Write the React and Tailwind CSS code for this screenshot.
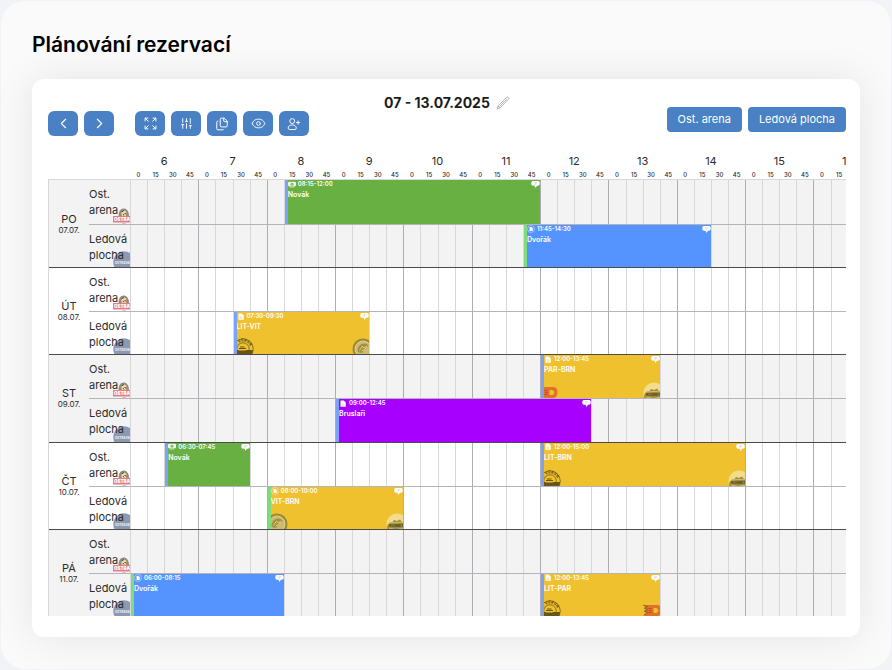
import { ChevronLeft, ChevronRight, SlidersVertical, Files, Eye } from "lucide-react";

const hours = [6, 7, 8, 9, 10, 11, 12, 13, 14, 15, 16];
const quarters = hours.flatMap((hour) => [0, 15, 30, 45].map((minute) => ({ hour, minute })));

const days = [
  {
    name: "PO",
    date: "07.07.",
    arena: [{ time: "08:15-12:00", title: "Novák", color: "green", icon: "money" }],
    plocha: [{ time: "11:45-14:30", title: "Dvořák", color: "blue", icon: "ring", done: true }],
  },
  {
    name: "ÚT",
    date: "08.07.",
    arena: [],
    plocha: [{ time: "07:30-09:30", title: "LIT-VIT", color: "yellow", icon: "file" }],
  },
  {
    name: "ST",
    date: "09.07.",
    arena: [{ time: "12:00-13:45", title: "PAR-BRN", color: "yellow", icon: "file" }],
    plocha: [{ time: "09:00-12:45", title: "Bruslaři", color: "purple", icon: "file" }],
  },
  {
    name: "ČT",
    date: "10.07.",
    arena: [
      { time: "06:30-07:45", title: "Novák", color: "green", icon: "money" },
      { time: "12:00-15:00", title: "LIT-BRN", color: "yellow", icon: "file" },
    ],
    plocha: [{ time: "08:00-10:00", title: "VIT-BRN", color: "yellow", icon: "ring", done: true }],
  },
  {
    name: "PÁ",
    date: "11.07.",
    arena: [],
    plocha: [
      { time: "06:00-08:15", title: "Dvořák", color: "blue", icon: "ring", done: true },
      { time: "12:00-13:45", title: "LIT-PAR", color: "yellow", icon: "file" },
    ],
  },
];

const colors = {
  green: "bg-[#68b041]",
  blue: "bg-[#5594ff]",
  yellow: "bg-[#efc12e]",
  purple: "bg-[#a800ff]",
};

// "08:15" -> grid line of the quarter it starts on
const toLine = (time) => {
  const [h, m] = time.split(":").map(Number);
  return (h - hours[0]) * 4 + m / 15 + 1;
};

const ExpandIcon = () => (
  <svg viewBox="0 0 24 24" className="size-[13px]" fill="none" stroke="currentColor" strokeWidth="1.8">
    <path d="M2 8V2h6M2 2l6.500 6.500M16 2h6v6M22 2l-6.500 6.500M2 16v6h6M2 22l6.500-6.500M22 16v6h-6M22 22l-6.500-6.500" />
  </svg>
);

const PersonAddIcon = () => (
  <svg viewBox="0 0 24 24" className="size-3.5" fill="none" stroke="currentColor" strokeWidth="1.6">
    <circle cx="9" cy="7" r="4.2" />
    <path d="M9 13.500c-4 0-7 2.500-7 5.500 0 1.500 1 2.500 2.500 2.500h9c1.500 0 2.500-1 2.500-2.500 0-3-3-5.500-7-5.500zM19 6v7M15.500 9.500h7" />
  </svg>
);

const PencilIcon = () => (
  <svg viewBox="0 0 24 24" className="size-3.5" fill="none" stroke="currentColor" strokeWidth="1.2">
    <path d="M2 22l1.500-5L18 2.500c1-1 2.500-1 3.300 0 .9.9.9 2.300 0 3.300L7 20.500zM3.500 17L7 20.500M16 4.500L19.500 8M5.500 18.500L17.500 6.500" />
  </svg>
);

const EventIcon = ({ type }) => {
  if (type === "money") {
    return (
      <svg viewBox="0 0 14 12" className="h-[7px] w-2">
        <rect x="0" y="1" width="14" height="8.500" rx="2.500" fill="#fff" fillOpacity="0.9" />
        <circle cx="7" cy="5.500" r="2.500" fill="#68b041" />
        <path d="M7 4v3" stroke="#fff" />
        <path d="M3 11h8" stroke="#fff" strokeOpacity="0.7" />
      </svg>
    );
  }
  if (type === "ring") {
    return (
      <svg viewBox="0 0 16 16" className="size-2">
        <circle cx="8" cy="8" r="7" fill="none" stroke="#fff" strokeOpacity="0.8" />
        <path d="M5 4h4l2.500 2.500V12H5z" fill="#fff" />
      </svg>
    );
  }
  return (
    <svg viewBox="0 0 14 14" className="h-[7px] w-2">
      <path d="M2 1h6.500l4 4v8.500H2z" fill="#fff" />
      <path d="M4.500 8h5M4.500 10.500h5" stroke="#efc12e" />
    </svg>
  );
};

const CommentIcon = () => (
  <svg viewBox="0 0 18 15" className="absolute top-0.5 right-0 h-[7px] w-[9px]">
    <path d="M4 0h10c2.500 0 4 1.500 4 3.500v3c0 2-1.500 3.500-4 3.500h-2l-3 5-2-5H4C1.500 10 0 8.500 0 6.500v-3C0 1.500 1.500 0 4 0z" fill="#fff" />
    <path d="M6.500 4h6M7 6.500h3" stroke="#a5a5a5" />
  </svg>
);

const TeamLogo = ({ team, id }) => {
  if (team === "LIT") {
    return (
      <svg viewBox="0 0 44 44" className="size-[22px] opacity-75">
        <defs>
          <path id={id} d="M7 22a15 15 0 0 1 30 0" />
        </defs>
        <circle cx="22" cy="22" r="20.500" fill="none" stroke="#3b3210" strokeWidth="1.500" />
        <circle cx="22" cy="22" r="12.500" fill="none" stroke="#3b3210" strokeWidth="1.500" />
        <text fontSize="8" fontWeight="800" fill="#3b3210">
          <textPath href={`#${id}`}>HC VERVA</textPath>
        </text>
        <path d="M2 24h40a20 20 0 0 1-40 0z" fill="#3b3210" />
        <path d="M12 22c1-6 5-8 10-8s9 3 9 7l-4 4H14z" fill="#efc12e" />
        <path d="M14 21h14M16 18h9" stroke="#3b3210" strokeWidth="2" />
      </svg>
    );
  }
  if (team === "VIT") {
    return (
      <svg viewBox="0 0 44 44" className="size-[22px] opacity-80">
        <circle cx="22" cy="22" r="21" fill="#857a45" />
        <circle cx="22" cy="22" r="16" fill="#c5bc7e" stroke="#ddd59b" strokeWidth="2" />
        <path d="M11 26c0-9 6-15 14-15 5 0 8 3 8 7-3-2-6-1-8 3l-3 7c-4 3-8 2-11-2z" fill="#918449" />
        <path d="M15 25l6-9 3 4 6-4M19 26l6-3" fill="none" stroke="#d9d091" strokeWidth="2" />
      </svg>
    );
  }
  if (team === "PAR") {
    return (
      <svg viewBox="0 0 44 44" className="size-[22px]">
        <path d="M0 10h29c5 0 8 4 8 10s-3 12-8 12H0l7-6-6-3 6-3-6-3 6-2z" fill="#e0702b" />
        <path d="M0 10l9 3-6 3 7 3-7 3 7 3-8 5" fill="none" stroke="#8a6a20" strokeWidth="2" />
        <path d="M22 17h4c5 0 5 8 0 8h-4z" fill="#efc12e" stroke="#efc12e" strokeWidth="2" />
        <path d="M11 17h6M12 21h5M11 25h6" stroke="#b8521d" strokeWidth="2" />
      </svg>
    );
  }
  return (
    <svg viewBox="0 0 44 44" className="size-[22px]">
      <circle cx="22" cy="22" r="21" fill="#f2dc8d" />
      <path d="M3 24l4-5 6-1 3-4 6 2 6-3 4 5 7 2-1 11-7 5-10 2-12-2-7-5z" fill="#a08d3d" />
      <path d="M6 20l32-2M6 30l14 3 16-3" fill="none" stroke="#e5cf77" strokeWidth="1.500" />
      <text x="6" y="28" fontSize="8" fontWeight="800" fontStyle="italic" fill="#5a4f20">
        KOMETA
      </text>
    </svg>
  );
};

const ArenaLogo = () => (
  <svg viewBox="0 0 44 44" className="absolute -right-[5px] -bottom-1.5 size-[22px]">
    <path d="M11 16c0-9 4-15 10-15s11 5 11 15z" fill="#8f8b85" />
    <path d="M18 16c-3-5-1-11 4-11s6 6 4 11z" fill="#f3dc9a" />
    <path d="M17 8l5-3M23 11l4 1M20 12l2 3" stroke="#4c4a46" strokeWidth="2" />
    <path d="M0 16h44v13H0z" fill="#e07f8a" />
    <text x="2" y="26" fontSize="9" fontWeight="900" fill="#fff">
      OSTRAVA
    </text>
    <path d="M18 30l4 4 4-4z" fill="#f0b0b5" />
  </svg>
);

const PlochaLogo = () => (
  <svg viewBox="0 0 44 44" className="absolute -right-[5px] -bottom-1.5 size-[22px]">
    <circle cx="22" cy="22" r="21.500" fill="#8a9ab3" />
    <text x="4" y="25" fontSize="6" fontWeight="800" fill="#e6ebf2">
      OSTRAVAR
    </text>
  </svg>
);

const Reservation = ({ event, id }) => {
  const [from, to] = event.time.split("-");
  const teams = event.color === "yellow" ? event.title.split("-") : [];

  return (
    <div
      style={{ gridColumn: `${toLine(from)} / ${toLine(to)}` }}
      className={`relative row-start-1 -mt-px ml-px overflow-hidden border-l-[3px] text-white ${colors[event.color]} ${
        event.done ? "border-[#7fdc7c]" : "border-[#7aa2f7]"
      }`}
    >
      <div className="flex h-[10px] items-center gap-0.5 text-[6px] leading-[10px] font-semibold">
        <EventIcon type={event.icon} />
        <span>{event.time}</span>
      </div>
      <p className="text-[7px] leading-3 font-semibold">{event.title}</p>
      <CommentIcon />
      {teams.length > 0 && (
        <>
          <div className="absolute -bottom-1.5 -left-[5px]">
            <TeamLogo team={teams[0]} id={`${id}-home`} />
          </div>
          <div className="absolute -right-[5px] -bottom-1.5">
            <TeamLogo team={teams[1]} id={`${id}-away`} />
          </div>
        </>
      )}
    </div>
  );
};

const CourtRow = ({ name, logo, events, first, id }) => (
  <div className={`grid min-h-0 grid-cols-[41px_1fr] ${first ? "" : "border-t border-[#b4b4ba]"}`}>
    <div className="relative overflow-hidden">
      {logo}
      <p className="relative pt-1.5 text-[11px] leading-4 text-[#2b2b2b]">{name}</p>
    </div>
    <div className="overflow-hidden">
      <div className="grid h-full w-[105%] grid-cols-44 grid-rows-1">
        {quarters.map(({ hour, minute }, i) => (
          <div
            key={i}
            style={{ gridColumn: i + 1 }}
            className={`row-start-1 border-l ${
              minute === 0 && hour !== 6 ? "border-[#adadb2]" : "border-[#d8d8da]"
            }`}
          />
        ))}
        {events.map((event) => (
          <Reservation key={event.time} event={event} id={`${id}-${event.title}`} />
        ))}
      </div>
    </div>
  </div>
);

const ToolButton = ({ label, children }) => (
  <button
    type="button"
    aria-label={label}
    className="flex h-[25px] w-[30px] items-center justify-center rounded-md bg-[#4981c4] text-white"
  >
    {children}
  </button>
);

const App = () => {
  return (
    <div className="min-h-screen bg-[#f1f3f7] p-px font-['Inter',sans-serif]">
      <main className="rounded-3xl bg-[#fafafa] px-[31px] pt-7 pb-8">
        <h1 className="text-[21px] leading-8 font-semibold text-black">Plánování rezervací</h1>

        <section className="mt-[18px] rounded-xl bg-white pt-3 pr-3.5 pb-[21px] pl-4 shadow-[0_0_40px_rgba(0,0,0,0.09)]">
          <header className="grid grid-cols-[1fr_auto_1fr] items-start">
            <div className="flex gap-[21px] pt-5">
              <div className="flex gap-1.5">
                <ToolButton label="Předchozí týden">
                  <ChevronLeft size={17} strokeWidth={1.5} />
                </ToolButton>
                <ToolButton label="Další týden">
                  <ChevronRight size={17} strokeWidth={1.5} />
                </ToolButton>
              </div>
              <div className="flex gap-1.5">
                <ToolButton label="Celá obrazovka">
                  <ExpandIcon />
                </ToolButton>
                <ToolButton label="Filtry">
                  <SlidersVertical size={13} strokeWidth={1.7} />
                </ToolButton>
                <ToolButton label="Kopírovat">
                  <Files size={14} strokeWidth={1.7} />
                </ToolButton>
                <ToolButton label="Zobrazení">
                  <Eye size={15} strokeWidth={1.5} />
                </ToolButton>
                <ToolButton label="Přidat osobu">
                  <PersonAddIcon />
                </ToolButton>
              </div>
            </div>

            <div className="flex items-center gap-1.5">
              <h2 className="text-sm leading-6 font-bold text-[#1c1c1c]">07 - 13.07.2025</h2>
              <button type="button" aria-label="Upravit datum" className="text-[#9a9a9a]">
                <PencilIcon />
              </button>
            </div>

            <div className="flex justify-end gap-1.5 pt-4">
              <button type="button" className="h-[25px] rounded bg-[#4981c4] px-[11px] text-[11px] text-white">
                Ost. arena
              </button>
              <button type="button" className="h-[25px] rounded bg-[#4981c4] px-[11px] text-[11px] text-white">
                Ledová plocha
              </button>
            </div>
          </header>

          <div className="mt-4 ml-[82px] overflow-hidden">
            <div className="grid w-[105%] grid-cols-11 text-center text-[#2b2b2b]">
              {hours.map((hour) => (
                <div key={hour}>
                  <div className="text-[11px] leading-[18px]">{hour}</div>
                  <div className="grid grid-cols-4 text-[6px] leading-[9px] font-medium">
                    {(hour === 16 ? [0, 15] : [0, 15, 30, 45]).map((minute) => (
                      <span key={minute}>{minute}</span>
                    ))}
                  </div>
                </div>
              ))}
            </div>
          </div>

          <div className="grid h-[437px] grid-rows-5 border-t border-l border-[#d8d8da]">
            {days.map((day, i) => (
              <div
                key={day.name}
                className={`grid min-h-0 grid-cols-[40px_1fr] ${i % 2 === 0 ? "bg-[#f3f3f3]" : "bg-white"} ${
                  i > 0 ? "border-t border-[#4a4a4d]" : ""
                }`}
              >
                <div className="flex flex-col items-center justify-center text-[#2b2b2b]">
                  <span className="text-[11px] leading-3">{day.name}</span>
                  <span className="text-[8px] leading-[10px]">{day.date}</span>
                </div>
                <div className="grid min-h-0 grid-rows-2">
                  <CourtRow
                    first
                    id={`${i}-a`}
                    name={<>Ost.<br />arena</>}
                    logo={<ArenaLogo />}
                    events={day.arena}
                  />
                  <CourtRow
                    id={`${i}-p`}
                    name={<>Ledová<br />plocha</>}
                    logo={<PlochaLogo />}
                    events={day.plocha}
                  />
                </div>
              </div>
            ))}
          </div>
        </section>
      </main>
    </div>
  );
};

export default App;
